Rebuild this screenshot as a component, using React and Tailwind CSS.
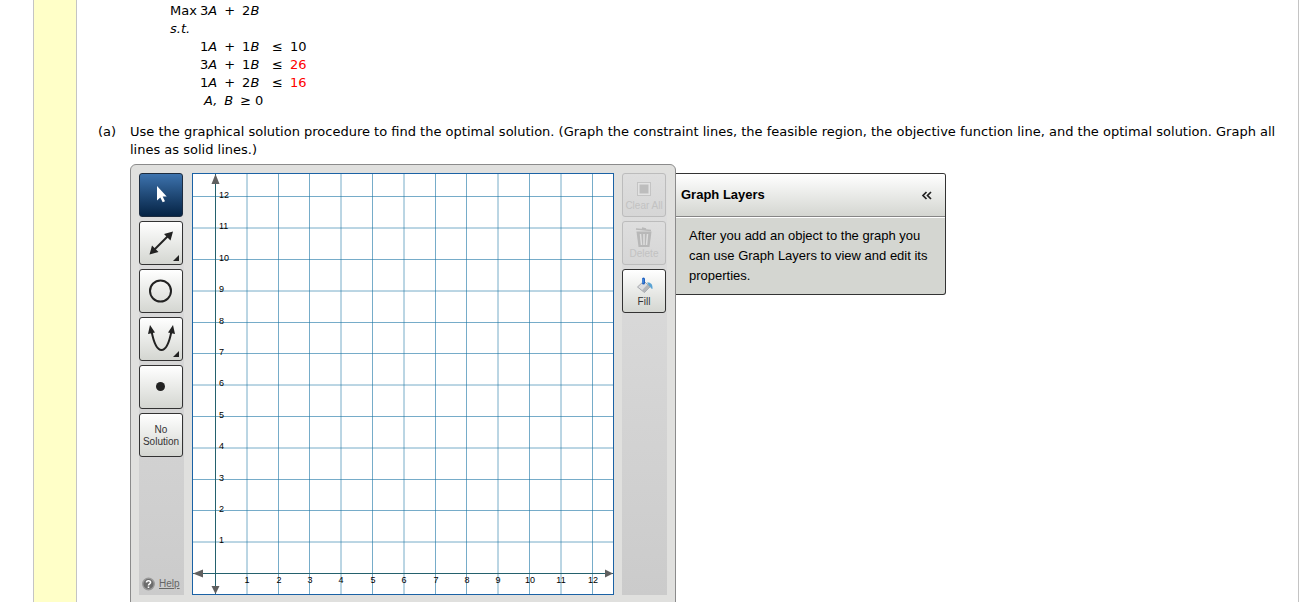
import clsx from "clsx";

const GRAPH_SIZE = 422;
const ORIGIN_X = 23.5;
const ORIGIN_Y = 400.5;
const UNIT = 31.4;
const ticks = Array.from({ length: 12 }, (_, i) => i + 1);

const toHalf = (value) => Math.round(value * 2) / 2;
const gridX = (n) => toHalf(ORIGIN_X + n * UNIT);
const gridY = (n) => toHalf(ORIGIN_Y - n * UNIT);

const constraints = [
  { a: 1, b: 1, limit: 10 },
  { a: 3, b: 1, limit: 26, random: true },
  { a: 1, b: 2, limit: 16, random: true },
];

function Expression({ a, b }) {
  return (
    <span className="flex gap-[7px]">
      <span>{a}<i>A</i></span>
      <span>+</span>
      <span>{b}<i>B</i></span>
    </span>
  );
}

function Problem() {
  return (
    <table className="ml-[93px] border-collapse text-left">
      <tbody>
        <tr>
          <td className="w-[30px] p-0">Max</td>
          <td className="w-[72px] p-0"><Expression a={3} b={2} /></td>
          <td className="p-0"></td>
        </tr>
        <tr>
          <td className="p-0"><i>s.t.</i></td>
        </tr>
        {constraints.map((row, index) => (
          <tr key={index}>
            <td className="p-0"></td>
            <td className="p-0"><Expression a={row.a} b={row.b} /></td>
            <td className="p-0">
              <span className="flex gap-[7px]">
                <span>≤</span>
                <span className={clsx(row.random && "text-[#ff0000]")}>{row.limit}</span>
              </span>
            </td>
          </tr>
        ))}
        <tr>
          <td className="p-0"></td>
          <td colSpan={2} className="p-0 pl-1">
            <span className="flex gap-[7px]">
              <i>A,</i>
              <i>B</i>
              <span className="flex gap-1"><span>≥</span><span>0</span></span>
            </span>
          </td>
        </tr>
      </tbody>
    </table>
  );
}

function ToolButton({ label, active, disabled, menu, children }) {
  return (
    <button
      type="button"
      aria-label={label}
      disabled={disabled}
      className={clsx(
        "relative flex h-11 w-11 flex-col items-center justify-center rounded-[3px] border bg-linear-to-b text-[10px] leading-3",
        active && "border-[#1d2c3f] from-[#3d73ae] to-[#062445]",
        disabled && "border-[#bcbcbc] from-[#dedede] to-[#d6d6d6] text-[#c2c2c2]",
        !active && !disabled && "border-[#333] from-white to-[#d4d6d1] text-[#333]"
      )}
    >
      {children}
      {menu && (
        <svg className="absolute right-[3px] bottom-[3px]" width="6" height="6" viewBox="0 0 6 6" aria-hidden="true">
          <path d="M6 0V6H0Z" fill="#222" />
        </svg>
      )}
    </button>
  );
}

function Toolbar() {
  return (
    <div className="flex w-[45px] shrink-0 flex-col gap-1 bg-linear-to-b from-[#dfdfdf] to-[#cbcbcb]">
      <ToolButton label="Select" active>
        <svg width="42" height="42" viewBox="0 0 42 42" aria-hidden="true">
          <path d="M17 12V26.500L20.300 23.500L22.700 28.300L25 27.200L22.700 22.400H26.700Z" fill="#fff" />
        </svg>
      </ToolButton>
      <ToolButton label="Line" menu>
        <svg width="42" height="42" viewBox="0 0 42 42" aria-hidden="true">
          <path d="M13 29L29 13" stroke="#222" strokeWidth="2" />
          <path d="M33 9.500L30.500 18.500L24 12Z M9.500 32.500L12 23.500L18.500 30Z" fill="#222" />
        </svg>
      </ToolButton>
      <ToolButton label="Circle">
        <svg width="42" height="42" viewBox="0 0 42 42" aria-hidden="true">
          <circle cx="20.500" cy="21" r="10.500" fill="none" stroke="#222" strokeWidth="2" />
        </svg>
      </ToolButton>
      <ToolButton label="Parabola" menu>
        <svg width="42" height="42" viewBox="0 0 42 42" aria-hidden="true">
          <path d="M11.500 13C14 26 17.500 32 21.500 32S29 26 31.500 13" fill="none" stroke="#222" strokeWidth="2" />
          <path d="M10 7L15 14.500L8 16Z M33 7L35 16L28 14.500Z" fill="#222" />
        </svg>
      </ToolButton>
      <ToolButton label="Point">
        <svg width="42" height="42" viewBox="0 0 42 42" aria-hidden="true">
          <circle cx="20.500" cy="20.500" r="4.500" fill="#222" />
        </svg>
      </ToolButton>
      <ToolButton label="No Solution">
        <span className="pt-0.5">No<br />Solution</span>
      </ToolButton>
      <a href="#help" className="mt-auto flex items-center gap-1 pb-1 pl-[3px] text-[10px] leading-3 text-[#666]">
        <svg width="13" height="14" viewBox="0 0 14 14" aria-hidden="true">
          <circle cx="7" cy="7" r="6.200" fill="#6c6c6c" stroke="#999" strokeWidth="1.500" />
          <path d="M4.800 5.500C4.800 2.800 9.200 2.900 9.200 5.300C9.200 6.900 7 6.800 7 8.500M7 9.800V11.300" fill="none" stroke="#fff" strokeWidth="1.700" />
        </svg>
        <span className="underline">Help</span>
      </a>
    </div>
  );
}

function Graph() {
  return (
    <svg
      className="shrink-0 bg-white"
      width={GRAPH_SIZE}
      height={GRAPH_SIZE}
      viewBox="0 0 422 422"
      role="img"
      aria-label="Coordinate grid"
    >
      {ticks.map((n) => (
        <g key={n} stroke="#1b74a5" strokeOpacity="0.6">
          <line x1={gridX(n)} x2={gridX(n)} y1="0" y2="422" />
          <line x1="0" x2="422" y1={gridY(n)} y2={gridY(n)} />
        </g>
      ))}
      <path d="M23.500 1V421M1 400.500H421" stroke="#24616d" />
      <path
        d="M23.500 1L27.500 11H19.500Z M23.500 421L27.500 413H19.500Z M1 400.500L11 396.500V404.500Z M421 400.500L413 396.500V404.500Z"
        fill="#606060"
      />
      <g fontSize="9" fill="#000">
        {ticks.map((n) => (
          <g key={n}>
            <text x="27" y={Math.round(gridY(n)) + 1}>{n}</text>
            <text x={Math.round(gridX(n))} y="410" textAnchor="middle">{n}</text>
          </g>
        ))}
      </g>
      <rect x="0.500" y="0.500" width="421" height="421" fill="none" stroke="#1b62a5" />
    </svg>
  );
}

function Actions() {
  return (
    <div className="flex w-[45px] shrink-0 flex-col gap-1 bg-linear-to-b from-[#dfdfdf] to-[#cbcbcb]">
      <ToolButton label="Clear All" disabled>
        <svg width="20" height="20" viewBox="0 0 20 20" aria-hidden="true">
          <rect x="3.500" y="3.500" width="13" height="13" fill="#e2e2e2" stroke="#c4c4c4" />
          <rect x="5.500" y="5.500" width="9" height="9" fill="#bdbdbd" />
        </svg>
        <span className="mt-px whitespace-nowrap">Clear All</span>
      </ToolButton>
      <ToolButton label="Delete" disabled>
        <svg width="20" height="20" viewBox="0 0 20 20" aria-hidden="true">
          <path d="M2 2L17 3.500M8 1L12 2" stroke="#b8b8b8" strokeWidth="1.500" />
          <path d="M2.500 4.500H17.500L15.500 20H4.500Z" fill="#b8b8b8" />
          <path d="M6.500 7L7.500 18M10 7V18M13.500 7L12.500 18" stroke="#dedede" strokeWidth="1.500" />
        </svg>
        <span className="mt-px">Delete</span>
      </ToolButton>
      <ToolButton label="Fill">
        <svg width="20" height="20" viewBox="0 0 20 20" aria-hidden="true">
          <path d="M3.500 12L10 6L16 12L10.500 17.500Z" fill="#dcdde0" stroke="#a5a7ac" />
          <path d="M10.500 17.500L16 12L13.500 9.500L8 15.200Z" fill="#b4b6ba" />
          <path d="M13 7.500C16.500 7 19 9 18.500 14C16.500 13.500 16.500 11.500 15 11Z" fill="#5aa3d4" />
          <path d="M9.500 4V8" stroke="#1d5fc0" strokeWidth="3" strokeLinecap="round" />
          <path d="M9 4V8" stroke="#69a5ed" />
        </svg>
        <span className="mt-px">Fill</span>
      </ToolButton>
    </div>
  );
}

function GraphLayers() {
  return (
    <section className="mt-[9px] w-[270px] shrink-0 overflow-hidden rounded-r-[3px] border border-l-0 border-[#333] bg-[#d4d6d1] text-[13px]">
      <div className="flex h-[43px] items-center justify-between border-b border-[#858585] bg-linear-to-b from-white to-[#d4d6d1] pr-3 pl-[5px]">
        <h2 className="font-bold">Graph Layers</h2>
        <button type="button" aria-label="Collapse Graph Layers">
          <svg width="12" height="10" viewBox="0 0 12 10" aria-hidden="true">
            <path d="M5.500 2L2 5.500L5.500 9M10 2L6.500 5.500L10 9" fill="none" stroke="#222" strokeWidth="1.700" />
          </svg>
        </button>
      </div>
      <p className="border-t border-white px-[13px] py-2 leading-5">
        After you add an object to the graph you can use Graph Layers to view and edit its properties.
      </p>
    </section>
  );
}

function App() {
  return (
    <div className="flex h-screen overflow-hidden bg-white pr-1 pl-[33px] font-['DejaVu_Sans',Verdana,sans-serif] text-[13px] leading-[18px] text-black">
      <aside className="w-11 shrink-0 border-x border-[#c4c4c4] bg-[#ffffc8]" />
      <main className="min-w-0 flex-1 border-r border-[#c4c4c4] pt-0.5">
        <Problem />

        {/* Part (a) */}
        <div className="mt-[13px] flex pl-[21px]">
          <span className="w-8 shrink-0">(a)</span>
          <div className="min-w-0 flex-1 pr-2">
            <p>
              Use the graphical solution procedure to find the optimal solution. (Graph the constraint lines, the
              feasible region, the objective function line, and the optimal solution. Graph all lines as solid lines.)
            </p>

            {/* Graphing tool */}
            <div className="mt-[5px] flex items-start font-['Liberation_Sans',Arial,sans-serif]">
              <div className="flex shrink-0 gap-2 rounded-t-md border border-[#8b8b8b] bg-[#e0e0de] p-2">
                <Toolbar />
                <Graph />
                <Actions />
              </div>
              <GraphLayers />
            </div>
          </div>
        </div>
      </main>
    </div>
  );
}

export default App;
